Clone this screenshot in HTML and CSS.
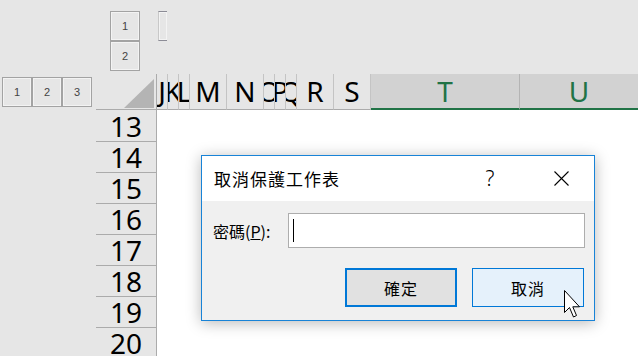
FILE: index.html
```html
<!DOCTYPE html>
<html lang="zh-Hant">
<head>
<meta charset="utf-8">
<title>取消保護工作表</title>
<link rel="stylesheet" href="styles.css">
</head>
<body>
<div class="sheet">
  <div class="blank"></div>
  <div class="col-outline">
    <div class="obtn">1</div>
    <div class="obtn">2</div>
  </div>
  <div class="col-outline-rest"><div class="obtn partial"></div></div>

  <div class="row-outline">
    <div class="obtn">1</div>
    <div class="obtn">2</div>
    <div class="obtn">3</div>
  </div>
  <div class="select-all">
    <svg width="30" height="29" viewBox="0 0 30 29"><polygon points="30,0 30,29 0,29" fill="#b4b4b4"/></svg>
  </div>
  <div class="col-headers">
    <div class="ch w11">J</div>
    <div class="ch w11">K</div>
    <div class="ch w11">L</div>
    <div class="ch w37">M</div>
    <div class="ch w37">N</div>
    <div class="ch w11">O</div>
    <div class="ch w11">P</div>
    <div class="ch w11">Q</div>
    <div class="ch w37">R</div>
    <div class="ch w37">S</div>
    <div class="ch sel w149">T</div>
    <div class="ch sel wrest">U</div>
  </div>

  <div class="blank"></div>
  <div class="row-headers">
    <div class="rh">13</div>
    <div class="rh">14</div>
    <div class="rh">15</div>
    <div class="rh">16</div>
    <div class="rh">17</div>
    <div class="rh">18</div>
    <div class="rh">19</div>
    <div class="rh">20</div>
  </div>
  <div class="cells"></div>
</div>

<div class="dialog">
  <div class="dlg-title">
    <span class="dlg-caption">取消保護工作表</span>
    <span class="dlg-help">?</span>
    <span class="dlg-close">
      <svg width="15" height="15" viewBox="0 0 15 15"><path d="M0.5 0.5 L14.5 14.5 M14.5 0.5 L0.5 14.5" stroke="#000" stroke-width="1.1" fill="none"/></svg>
    </span>
  </div>
  <div class="dlg-body">
    <div class="dlg-row">
      <label class="dlg-label">密碼(<u>P</u>):</label>
      <div class="dlg-input"><span class="caret"></span></div>
    </div>
    <div class="dlg-buttons">
      <div class="btn btn-default">確定</div>
      <div class="btn btn-hover">取消</div>
    </div>
  </div>
</div>

<svg class="cursor" width="20" height="30" viewBox="0 0 20 30">
  <polygon points="0.5,0.5 0.5,22.5 5.5,17.5 9.5,27 12.5,25.5 8.8,16.8 15.5,16.8" fill="#fff" stroke="#000" stroke-width="1" stroke-linejoin="miter"/>
</svg>
</body>
</html>
```

FILE: styles.css
```css
* { box-sizing: border-box; }

body {
  margin: 0;
  width: 638px;
  height: 356px;
  overflow: hidden;
  position: relative;
  background: #e6e6e6;
  font-family: "Noto Sans", "Noto Sans CJK TC", sans-serif;
  color: #000;
}

.sheet {
  display: grid;
  grid-template-columns: 96px 61px 1fr;
  grid-template-rows: 74px 36px 1fr;
  height: 356px;
}

.obtn {
  width: 30px;
  height: 30px;
  border: 1px solid #a3a3a3;
  box-shadow: inset 0 0 0 1px #f3f3f3;
  background: #e6e6e6;
  display: flex;
  align-items: center;
  justify-content: center;
  font-family: "Liberation Sans", sans-serif;
  font-size: 11px;
  color: #444;
}

.col-outline {
  display: flex;
  flex-direction: column;
  padding: 11px 0 0 14px;
}

.col-outline-rest {
  padding: 11px 0 0 1px;
}

.obtn.partial {
  width: 9px;
  border-right: none;
  border-color: #8c8c96;
  border-left-color: #c8c8c8;
}

.row-outline {
  display: flex;
  padding: 3px 0 0 2px;
}

.select-all {
  display: flex;
  justify-content: flex-end;
  align-items: flex-end;
  padding: 0 2px 1px 0;
  border-right: 1px solid #ababab;
  border-bottom: 1px solid #ababab;
}

.col-headers {
  display: flex;
  overflow: hidden;
}

.ch {
  flex: none;
  display: flex;
  justify-content: center;
  align-items: center;
  overflow: hidden;
  border-right: 1px solid #c4c4c4;
  border-bottom: 1px solid #ababab;
  font-size: 28px;
  line-height: 1;
  padding-bottom: 1px;
}

.w11 { width: 11px; }
.w37 { width: 37px; }
.w149 { width: 149px; }
.wrest { flex: 1; border-right: none; }

.ch.sel {
  background: #d2d2d2;
  color: #217346;
  border-right-color: #b4b4b4;
  border-bottom: 2px solid #217346;
  padding-bottom: 0;
}

.row-headers {
  border-right: 1px solid #ababab;
  padding-top: 1px;
}

.rh {
  height: 31px;
  border-bottom: 1px solid #ababab;
  display: flex;
  justify-content: flex-end;
  align-items: center;
  padding-right: 14px;
  font-size: 28px;
  line-height: 1;
}

.cells {
  background: #fff;
}

/* dialog */
.dialog {
  position: absolute;
  left: 201px;
  top: 155px;
  width: 394px;
  height: 166px;
  border: 1px solid #1883d7;
  background: #f0f0f0;
  box-shadow: 0 2px 14px rgba(0, 0, 0, 0.28);
  display: flex;
  flex-direction: column;
  font-family: "Noto Sans CJK TC", "Noto Sans", sans-serif;
}

.dlg-title {
  height: 45px;
  flex: none;
  background: #fff;
  display: flex;
  align-items: center;
  padding-left: 12px;
}

.dlg-caption {
  flex: 1;
  font-size: 17px;
  letter-spacing: 1px;
}

.dlg-help {
  width: 30px;
  text-align: center;
  font-family: "Noto Sans", sans-serif;
  font-weight: 300;
  font-size: 21px;
  line-height: 1;
}

.dlg-close {
  width: 46px;
  margin: 0 10px 0 33px;
  display: flex;
  justify-content: center;
  align-items: center;
}

.dlg-body {
  flex: 1;
  padding: 12px 9px 0 11px;
}

.dlg-row {
  display: flex;
  align-items: center;
  height: 35px;
}

.dlg-label {
  width: 75px;
  font-size: 16px;
}

.dlg-input {
  flex: 1;
  height: 35px;
  background: #fff;
  border: 1px solid #adadad;
  display: flex;
  align-items: center;
  padding-left: 4px;
}

.caret {
  width: 1px;
  height: 23px;
  background: #000;
}

.dlg-buttons {
  display: flex;
  justify-content: flex-end;
  gap: 15px;
  margin-top: 20px;
  padding-right: 1px;
}

.btn {
  width: 112px;
  height: 39px;
  display: flex;
  align-items: center;
  justify-content: center;
  font-size: 16px;
  letter-spacing: 1px;
}

.btn-default {
  background: #e1e1e1;
  border: 2px solid #0078d7;
}

.btn-hover {
  background: #e5f1fb;
  border: 1px solid #0078d7;
}

.cursor {
  position: absolute;
  left: 564px;
  top: 290px;
}
```
